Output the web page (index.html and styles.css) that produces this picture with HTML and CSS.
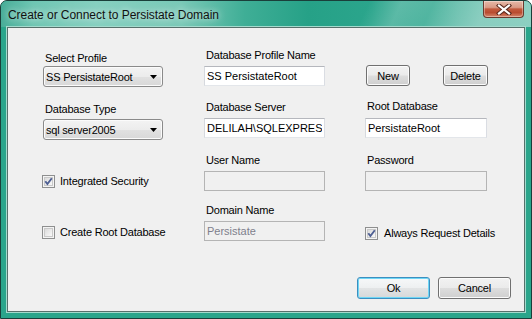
FILE: index.html
```html
<!DOCTYPE html>
<html lang="en">
<head>
<meta charset="utf-8">
<title>Create or Connect to Persistate Domain</title>
<link rel="stylesheet" href="styles.css">
</head>
<body>
<div class="window">
  <div class="titlebar">
    <span class="title">Create or Connect to Persistate Domain</span>
    <button class="close" aria-label="Close">
      <svg width="16" height="11" viewBox="0 0 16 11">
        <path d="M3 1.5 L13 9.5 M13 1.5 L3 9.5" stroke="#5a2a1e" stroke-width="4.2" stroke-linecap="square" fill="none"/>
        <path d="M3 1.5 L13 9.5 M13 1.5 L3 9.5" stroke="#ffffff" stroke-width="2.2" stroke-linecap="square" fill="none"/>
      </svg>
    </button>
  </div>
  <div class="client">
    <div class="form">
      <div class="field">
        <span class="label label-r1c1">Select Profile</span>
        <div class="combo"><span>SS PersistateRoot</span>
          <svg class="arrow" width="7" height="4" viewBox="0 0 7 4"><path d="M0 0 H7 L3.5 4 Z" fill="#000"/></svg>
        </div>
      </div>
      <div class="field">
        <span class="label">Database Profile Name</span>
        <input class="textbox" type="text" value="SS PersistateRoot">
      </div>
      <div class="field">
        <div class="btn-row">
          <button class="btn btn-new">New</button>
          <button class="btn btn-delete">Delete</button>
        </div>
      </div>

      <div class="field">
        <span class="label label-r2c1">Database Type</span>
        <div class="combo"><span>sql server2005</span>
          <svg class="arrow" width="7" height="4" viewBox="0 0 7 4"><path d="M0 0 H7 L3.5 4 Z" fill="#000"/></svg>
        </div>
      </div>
      <div class="field">
        <span class="label label-r2c2">Database Server</span>
        <input class="textbox" type="text" value="DELILAH\SQLEXPRESS">
      </div>
      <div class="field">
        <span class="label label-r2c3">Root Database</span>
        <input class="textbox textbox-wide" type="text" value="PersistateRoot">
      </div>

      <div class="field">
        <label class="check">
          <svg class="box" width="13" height="13" viewBox="0 0 13 13">
            <defs><linearGradient id="g1" x1="0" y1="0" x2="1" y2="1"><stop offset="0" stop-color="#d9d9d9"/><stop offset="1" stop-color="#fbfbfb"/></linearGradient></defs>
            <rect x="0.5" y="0.5" width="12" height="12" fill="#f4f4f4" stroke="#8e8f8f"/>
            <rect x="2.5" y="2.5" width="8" height="8" fill="url(#g1)" stroke="#c9c9c9"/>
            <path d="M3.3 6.2 L5.4 9 L9.8 3.2" stroke="#4e5f93" stroke-width="1.9" fill="none"/>
          </svg>
          <span>Integrated Security</span>
        </label>
      </div>
      <div class="field">
        <span class="label">User Name</span>
        <input class="textbox" type="text" value="" disabled>
      </div>
      <div class="field">
        <span class="label">Password</span>
        <input class="textbox textbox-wide" type="password" value="" disabled>
      </div>

      <div class="field">
        <label class="check check-r4">
          <svg class="box" width="13" height="13" viewBox="0 0 13 13">
            <defs><linearGradient id="g2" x1="0" y1="0" x2="1" y2="1"><stop offset="0" stop-color="#d9d9d9"/><stop offset="1" stop-color="#fbfbfb"/></linearGradient></defs>
            <rect x="0.5" y="0.5" width="12" height="12" fill="#f4f4f4" stroke="#8e8f8f"/>
            <rect x="2.5" y="2.5" width="8" height="8" fill="url(#g2)" stroke="#c9c9c9"/>
          </svg>
          <span>Create Root Database</span>
        </label>
      </div>
      <div class="field">
        <span class="label">Domain Name</span>
        <input class="textbox" type="text" value="Persistate" disabled>
      </div>
      <div class="field">
        <label class="check check-r4c3">
          <svg class="box" width="13" height="13" viewBox="0 0 13 13">
            <defs><linearGradient id="g3" x1="0" y1="0" x2="1" y2="1"><stop offset="0" stop-color="#d9d9d9"/><stop offset="1" stop-color="#fbfbfb"/></linearGradient></defs>
            <rect x="0.5" y="0.5" width="12" height="12" fill="#f4f4f4" stroke="#8e8f8f"/>
            <rect x="2.5" y="2.5" width="8" height="8" fill="url(#g3)" stroke="#c9c9c9"/>
            <path d="M3.3 6.2 L5.4 9 L9.8 3.2" stroke="#4e5f93" stroke-width="1.9" fill="none"/>
          </svg>
          <span>Always Request Details</span>
        </label>
      </div>
    </div>
    <div class="actions">
      <button class="btn btn-action btn-default">Ok</button>
      <button class="btn btn-action">Cancel</button>
    </div>
  </div>
</div>
</body>
</html>
```
FILE: styles.css
```css
html, body {
  margin: 0;
  padding: 0;
  background: #ffffff;
}

body {
  font-family: "Liberation Sans", Arial, sans-serif;
  font-size: 11px;
  color: #000;
}

.window {
  width: 532px;
  height: 319px;
  box-sizing: border-box;
  border: 1px solid #1a3f3a;
  border-radius: 7px 7px 0 0;
  background: #2aa58b;
  padding: 0 6px 6px 6px;
  display: flex;
  flex-direction: column;
  overflow: hidden;
}

.titlebar {
  height: 26px;
  margin: 0 -6px;
  padding: 0 6px;
  display: flex;
  align-items: flex-start;
  background:
    linear-gradient(115deg, rgba(255,255,255,0) 68%, rgba(255,255,255,0.18) 74%, rgba(255,255,255,0.05) 80%, rgba(255,255,255,0.28) 90%, rgba(255,255,255,0.22) 100%),
    linear-gradient(to right, #48ad98 0%, #6ec6b3 6%, #86d0c0 18%, #79c9b7 34%, #3fae96 46%, #26a187 58%, #2ba58c 70%, #57b8a4 86%, #6cc2b0 100%);
}

.title {
  margin: 7px 0 0 1px;
  font-family: "Liberation Sans", Arial, sans-serif;
  font-size: 12px;
  line-height: 14px;
  color: #111;
  letter-spacing: -0.05px;
  text-shadow: 0 0 6px rgba(255,255,255,0.75), 0 0 12px rgba(255,255,255,0.45);
}

.close {
  margin: 0 1px 0 auto;
  width: 41px;
  height: 17px;
  box-sizing: border-box;
  padding: 0;
  border: 1px solid #6a3a2e;
  border-top: none;
  border-radius: 0 0 4px 4px;
  background: linear-gradient(to bottom, #e6b9a8 0%, #d99a85 40%, #c25a3d 50%, #b94c30 72%, #d4876c 100%);
  box-shadow: inset 0 0 0 1px rgba(255,255,255,0.35);
  display: flex;
  align-items: center;
  justify-content: center;
}

.client {
  flex: 1;
  display: flex;
  flex-direction: column;
  border: 1px solid #56706b;
  box-shadow: 0 0 0 1px #a3dacd;
  background: #f0f0f0;
}

.form {
  display: grid;
  grid-template-columns: 161px 161px 1fr;
  grid-template-rows: 52px 53px 50px auto;
  padding: 21px 0 0 35px;
}

.field {
  display: flex;
  flex-direction: column;
  align-items: flex-start;
}

.label {
  line-height: 13px;
  margin-bottom: 4px;
  padding-left: 2px;
  letter-spacing: -0.2px;
  white-space: nowrap;
}

.label-r1c1 {
  margin-top: 3px;
  margin-bottom: 1px;
}

.label-r2c1 {
  margin-top: 2px;
  margin-bottom: 3px;
}

.label-r2c2 {
  margin-bottom: 4px;
}

.label-r2c3 {
  margin-top: -1px;
  margin-bottom: 5px;
}

.combo {
  box-sizing: border-box;
  width: 120px;
  height: 21px;
  border: 1px solid #8a8a8a;
  border-radius: 3px;
  background: linear-gradient(to bottom, #f3f3f3 0%, #ececec 50%, #e1e1e1 51%, #d8d8d8 100%);
  box-shadow: inset 0 0 0 1px #fbfbfb;
  display: flex;
  align-items: center;
  padding: 0 4px 0 2px;
  letter-spacing: -0.2px;
  white-space: nowrap;
}

.combo span {
  flex: 1;
}

.arrow {
  flex: none;
  margin-right: 1px;
}

.textbox {
  box-sizing: border-box;
  width: 121px;
  height: 20px;
  margin: 0;
  border: 1px solid;
  border-color: #b5b7bd #dadde3 #e3e6ea #d6d9de;
  background: #ffffff;
  padding: 0 2px;
  font-family: "Liberation Sans", Arial, sans-serif;
  font-size: 11px;
  letter-spacing: 0;
  color: #000;
  outline: none;
  appearance: none;
}

.textbox-wide {
  width: 122px;
}

.textbox:disabled {
  background: #f0f0f0;
  border-color: #b4b4b4;
  color: #7e7f8c;
}

.check {
  margin-top: 17px;
  height: 20px;
  display: flex;
  align-items: center;
  gap: 5px;
  margin-left: -1px;
  letter-spacing: -0.2px;
  white-space: nowrap;
}

.check-r4 {
  margin-top: 18px;
}

.check-r4c3 {
  margin-top: 19px;
  margin-left: 0;
  gap: 6px;
}

.box {
  flex: none;
}

.btn-row {
  margin-top: 16px;
  padding-left: 1px;
  display: flex;
  gap: 33px;
}

.btn {
  box-sizing: border-box;
  height: 21px;
  padding: 0;
  border: 1px solid #707070;
  border-radius: 3px;
  background: linear-gradient(to bottom, #f2f2f2 0%, #ebebeb 48%, #dddddd 52%, #cfcfcf 100%);
  box-shadow: inset 0 0 0 1px #fbfbfb;
  font-family: "Liberation Sans", Arial, sans-serif;
  font-size: 11px;
  letter-spacing: -0.2px;
  color: #000;
}

.btn-new {
  width: 44px;
}

.btn-delete {
  width: 45px;
}

.actions {
  margin-top: auto;
  display: flex;
  justify-content: flex-end;
  gap: 8px;
  padding: 0 13px 12px 0;
}

.btn-action {
  width: 73px;
  height: 22px;
}

.btn-default {
  border-color: #3c8fc0;
  box-shadow: inset 0 0 0 1px #6fd6f5;
  background: linear-gradient(to bottom, #f6f8f9 0%, #eef0f1 48%, #e2e4e5 52%, #d6d8d9 100%);
}
```
